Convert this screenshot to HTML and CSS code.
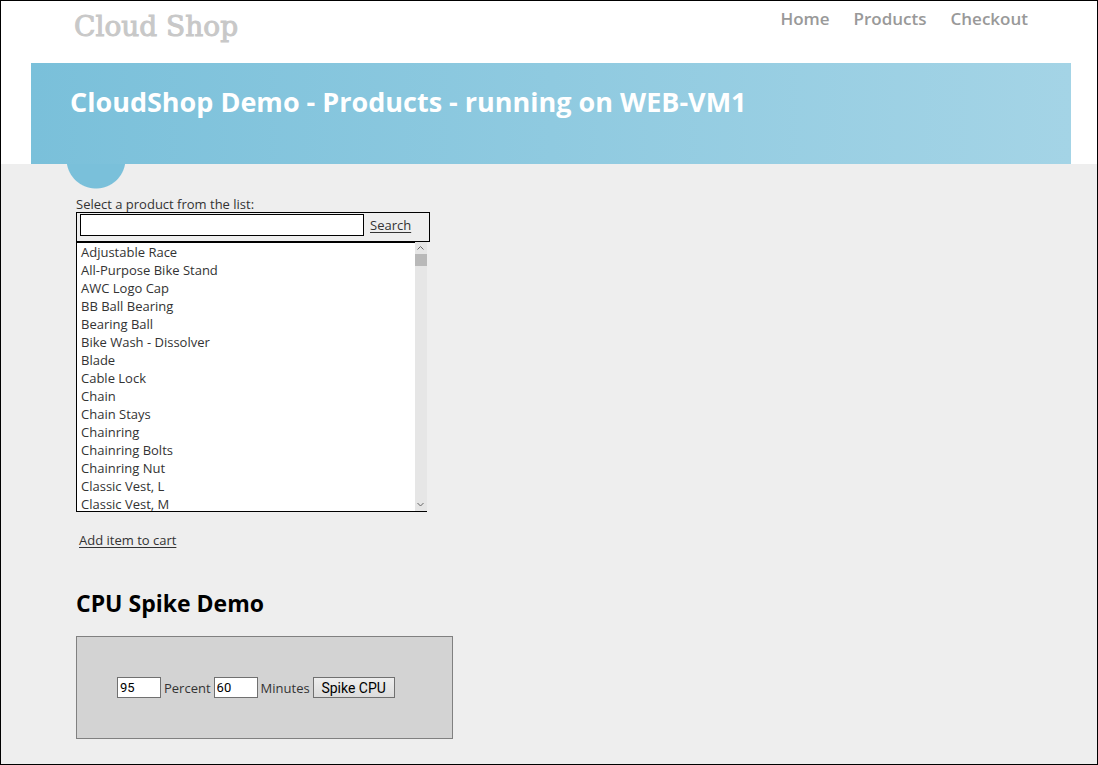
FILE: index.html
```html
<!DOCTYPE html>
<html lang="en">
<head>
<meta charset="utf-8">
<meta name="viewport" content="width=device-width, initial-scale=1">
<title>CloudShop Demo - Products</title>
<link rel="stylesheet" href="styles.css">
</head>
<body>
<div class="page">
  <header class="site-header">
    <a class="logo" href="#">Cloud Shop</a>
    <nav class="menu">
      <a href="#">Home</a>
      <a href="#">Products</a>
      <a href="#">Checkout</a>
    </nav>
  </header>
  <section class="banner-area">
    <div class="banner">
      <h1 class="banner-title">CloudShop Demo - Products - running on WEB-VM1</h1>
    </div>
  </section>
  <main class="content">
    <div class="banner-dot"></div>
    <label class="list-label" for="products">Select a product from the list:</label>
    <form class="search">
      <input class="search-box" type="text" aria-label="Search products">
      <a class="link" href="#">Search</a>
    </form>
    <div class="list">
      <select class="list-items" id="products" size="15">
        <option>Adjustable Race</option>
        <option>All-Purpose Bike Stand</option>
        <option>AWC Logo Cap</option>
        <option>BB Ball Bearing</option>
        <option>Bearing Ball</option>
        <option>Bike Wash - Dissolver</option>
        <option>Blade</option>
        <option>Cable Lock</option>
        <option>Chain</option>
        <option>Chain Stays</option>
        <option>Chainring</option>
        <option>Chainring Bolts</option>
        <option>Chainring Nut</option>
        <option>Classic Vest, L</option>
        <option>Classic Vest, M</option>
      </select>
      <div class="scrollbar" aria-hidden="true">
        <svg class="arrow" viewBox="0 0 12 12"><path d="M2.500 7.500 5.500 4.500 8.500 7.500"/></svg>
        <div class="thumb"></div>
        <svg class="arrow arrow-down" viewBox="0 0 12 12"><path d="M2.500 4 5.500 7 8.500 4"/></svg>
      </div>
    </div>
    <a class="link add-link" href="#">Add item to cart</a>
    <h2 class="spike-title">CPU Spike Demo</h2>
    <form class="spike">
      <input class="number" id="percent" type="text" value="95">
      <label for="percent">Percent</label>
      <input class="number" id="minutes" type="text" value="60">
      <label for="minutes">Minutes</label>
      <button class="spike-button" type="button">Spike CPU</button>
    </form>
  </main>
</div>
</body>
</html>
```
FILE: styles.css
```css
* {
  box-sizing: border-box;
}

body {
  margin: 0;
  font-family: "Open Sans", "Noto Sans", sans-serif;
  font-size: 13px;
  line-height: 18px;
  color: #333;
  background: #eee;
}

.page {
  display: flex;
  flex-direction: column;
  min-height: 100vh;
  border: 1px solid #000;
}

.site-header {
  display: flex;
  justify-content: space-between;
  align-items: flex-start;
  height: 62px;
  padding: 6px 69px 0 73px;
  background: #fff;
}

.logo {
  font-family: "DejaVu Serif", serif;
  font-size: 28px;
  line-height: 40px;
  color: #c8c8c8;
  text-decoration: none;
  -webkit-text-stroke: 1px #c8c8c8;
}

.menu {
  display: flex;
  gap: 24px;
  font-size: 17px;
  font-weight: 600;
  line-height: 24px;
}

.menu a {
  color: #999;
  text-decoration: none;
}

.banner-area {
  padding: 0 26px 0 30px;
  background: #fff;
}

.banner {
  min-height: 101px;
  padding: 19px 39px;
  background: linear-gradient(to right, #7ac0da, #a4d4e6);
}

.banner-title {
  margin: 0;
  font-size: 27px;
  font-weight: 700;
  line-height: 40px;
  color: #fff;
}

.content {
  display: flex;
  flex-direction: column;
  align-items: flex-start;
  padding: 0 75px 25px;
}

.banner-dot {
  width: 60px;
  height: 25px;
  margin: 0 0 7px -10px;
  background: radial-gradient(circle 30px at 30px -5px, #7ac0da 29px, transparent 30px);
}

.list-label {
  line-height: 16px;
}

.search {
  display: flex;
  align-items: center;
  gap: 6px;
  width: 354px;
  height: 30px;
  padding: 0 3px 4px;
  border: 1px solid #000;
}

.search-box {
  width: 284px;
  height: 22px;
  padding: 0 4px;
  border: 1px solid #000;
  background: #fff;
  font: inherit;
}

.link {
  color: #333;
  text-decoration: underline;
  text-underline-offset: 2px;
}

.list {
  display: flex;
  width: 351px;
  height: 270px;
}

.list-items {
  flex: 1;
  height: 100%;
  padding: 0;
  overflow: hidden;
  border: solid #000;
  border-width: 1px 0 1px 1px;
  border-radius: 0;
  outline: 0;
  background: #fff;
  color: #333;
  font: inherit;
  scrollbar-width: none;
}

.list-items option {
  min-height: 18px;
  padding: 0 4px;
  line-height: 18px;
}

.scrollbar {
  display: flex;
  flex-direction: column;
  width: 12px;
  border-bottom: 1px solid #000;
  background: #e6e6e6;
}

.arrow {
  width: 12px;
  height: 12px;
  fill: none;
  stroke: #666;
}

.arrow-down {
  margin-top: auto;
}

.thumb {
  height: 12px;
  background: #b9b9b9;
}

.add-link {
  margin: 19px 0 0 3px;
}

.spike-title {
  margin: 38px 0 16px;
  font-size: 23px;
  font-weight: 700;
  line-height: 33px;
  color: #000;
}

.spike {
  display: flex;
  align-items: center;
  gap: 3px;
  padding: 40px 57px 40px 40px;
  border: 1px solid #808080;
  background: #d3d3d3;
}

.number {
  width: 44px;
  height: 21px;
  padding: 0 2px;
  border: 1px solid #707070;
  background: #fff;
  color: #000;
  font-family: Roboto, sans-serif;
  font-size: 13px;
}

.spike-button {
  width: 82px;
  height: 21px;
  padding: 0;
  border: 1px solid #707070;
  background: linear-gradient(#eee, #dcdcdc);
  color: #000;
  font-family: Roboto, sans-serif;
  font-size: 14px;
}
```
